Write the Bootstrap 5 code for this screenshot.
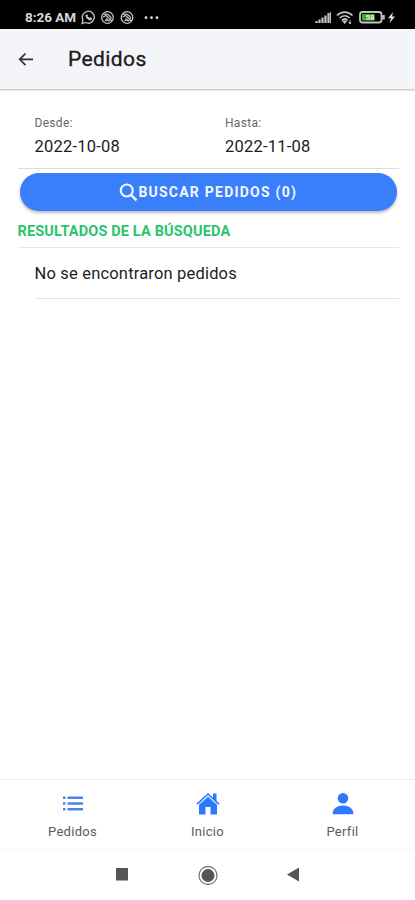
<!DOCTYPE html>
<html lang="es">
<head>
<meta charset="utf-8">
<meta name="viewport" content="width=device-width, initial-scale=1">
<title>Pedidos</title>
<link href="https://cdn.jsdelivr.net/npm/bootstrap@5.3.0/dist/css/bootstrap.min.css" rel="stylesheet">
<style>
body{font-family:Roboto,"Liberation Sans",sans-serif;color:#1c1c1e;height:900px;overflow:hidden}
svg{display:block;flex-shrink:0}
.status-bar{height:29px;background:#000;color:#d8d8d8;padding:6px 18px 0 25px}
.clock{font-size:13.5px;font-weight:700;line-height:22px;letter-spacing:-.05px;width:56px;white-space:nowrap}
.app-header{height:60px;background:#f4f5f9;padding-left:17px;box-shadow:0 1px 2px rgba(0,0,0,.3);z-index:1}
.app-title{font-size:21px;font-weight:400;-webkit-text-stroke:.35px #1c1c1e;line-height:28px;letter-spacing:.4px;margin-left:33px}
.content-area{padding:26px 16px 0 17.5px}
.dates{height:54px;border-bottom:1px solid #dcdcde}
.date-field{width:190.5px;padding-left:17px}
.field-label{font-size:12px;line-height:17px;color:#666;letter-spacing:.3px}
.field-value{font-size:16.5px;line-height:22px;margin-top:4px;letter-spacing:.22px}
.search-btn{height:38px;margin:4px 2px 0;background:#397ffc;color:#f2f6ff;font-size:14px;font-weight:700;letter-spacing:1.23px;box-shadow:0 2px 3px rgba(0,0,0,.28);border:0}
.results-title{font-size:14.5px;font-weight:700;line-height:22px;color:#2bc46d;margin-top:10px;height:27px;border-bottom:1px solid #e8e8ea;letter-spacing:.15px}
.result-item{font-size:16.5px;line-height:52px;height:51px;margin-left:17px;border-bottom:1px solid #e2e2e4;letter-spacing:.18px}
.tab-bar{height:71px;border-top:1px solid #ececec;border-bottom:1px solid #f7f7f7;padding:12px 5px 0}
.tab-label{font-size:13px;line-height:18px;color:#5b5b5b;margin-top:7px;letter-spacing:.3px}
.system-nav{height:50px;padding:0 115px}
</style>
<script src="https://cdn.jsdelivr.net/npm/bootstrap@5.3.0/dist/js/bootstrap.bundle.min.js"></script>
</head>
<body class="d-flex flex-column bg-white">
<div class="status-bar d-flex">
  <span class="clock">8:26 AM</span>
  <svg width="78" height="22" viewBox="81 6 78 22" fill="none" stroke="#c4c4c4" stroke-width="1.3">
    <path d="M82 23.5l1-3.5a6 6 0 1 1 2.5 2.5z"/><path d="M86 14.7c-1 3 3 6.500 5.500 5l.3-1.400-1.800-.9-.9.700-1.800-1.800.5-1z" fill="#c4c4c4" stroke-width=".6"/>
    <circle cx="107.500" cy="17.500" r="5.800"/><path d="M103.500 14.500c3-1 6 0 8 4M103 17l3-1.500 6 5.500M105 21c1-1 3-1 5 0M106 18.500l3 2.500"/>
    <circle cx="127" cy="17.500" r="5.800"/><path d="M123 14.500c3-1 6 0 8 4M122.500 17l3-1.500 6 5.500M124.500 21c1-1 3-1 5 0M125.500 18.500l3 2.500"/>
    <g fill="#ddd" stroke="none"><circle cx="146" cy="17.700" r="1.400"/><circle cx="151.500" cy="17.700" r="1.400"/><circle cx="157" cy="17.700" r="1.400"/></g>
  </svg>
  <svg class="ms-auto" width="82" height="22" viewBox="315 6 82 22" fill="none" stroke="#c4c4c4">
    <path d="M316.500 21v2M319.500 19.500v3.500M322.500 17.500v5.500M325.500 15.500v7.500M328.500 13v10" stroke-width="2.200"/><path d="M330.500 12v11" stroke-width="1"/>
    <path d="M337 15.500c4.500-4.500 11-4.500 15.500 0M339.700 18c3-3 7-3 10 0M342 20.300c2-1.800 3.700-1.800 5.500 0" stroke-width="1.700"/><path d="M344.700 23.500l-2-2.500h4zM350 20v4M348.500 22.500l1.500 1.500 1-1.500" fill="#c4c4c4" stroke-width=".9"/>
    <rect x="360" y="12" width="21.500" height="10.500" rx="2.500" stroke-width="1.800"/><path d="M383.500 15v4.500" stroke-width="2.500"/>
    <path d="M362 14h12.500v6.500H362z" fill="#46a82b" stroke="none"/>
    <text x="365.500" y="20.300" font-size="8" font-weight="700" fill="#e9f5e4" stroke="none">58</text>
    <path d="M393 12l-5 6.300h3l-1.500 5 5.500-6.800h-3z" fill="#ddd" stroke="none"/>
  </svg>
</div>
<header class="app-header d-flex align-items-center">
  <svg width="18" height="18" viewBox="0 0 18 18" fill="none" stroke="#303134" stroke-width="1.700"><path d="M8.500 3.500L2.700 9.300l5.800 5.800M2.900 9.300H16"/></svg>
  <h1 class="app-title mb-0">Pedidos</h1>
</header>
<main class="content-area flex-grow-1">
  <div class="dates d-flex">
    <div class="date-field"><div class="field-label">Desde:</div><div class="field-value">2022-10-08</div></div>
    <div class="date-field"><div class="field-label">Hasta:</div><div class="field-value">2022-11-08</div></div>
  </div>
  <div class="d-grid">
    <button type="button" class="btn search-btn rounded-pill d-flex align-items-center justify-content-center p-0">
      <svg width="19" height="20" viewBox="0 0 19 20" fill="none" stroke="#f2f6ff" stroke-width="2.200"><circle cx="7.800" cy="8.500" r="6"/><path d="M12 12.800l5.500 5.500" stroke-width="2.500"/></svg><span>BUSCAR PEDIDOS (0)</span>
    </button>
  </div>
  <h2 class="results-title mb-0">RESULTADOS DE LA BÚSQUEDA</h2>
  <div class="result-item">No se encontraron pedidos</div>
</main>
<nav class="tab-bar d-flex text-center">
  <div class="col d-flex flex-column align-items-center">
    <svg width="24" height="24" viewBox="0 0 24 24" fill="#4a83f0"><path d="M2 4.500h2.500V7H2zM6.500 4.500H22V7H6.500zM2 10.200h2.500v2.500H2zM6.500 10.200H22v2.500H6.500zM2 16h2.500v2.500H2zM6.500 16H22v2.500H6.500z"/></svg>
    <span class="tab-label">Pedidos</span>
  </div>
  <div class="col d-flex flex-column align-items-center">
    <svg width="26" height="24" viewBox="0 0 26 24" fill="#2f77fb"><path d="M13 4.300L4 12v10.500h6.500V15h5v7.500H22V12z"/><path d="M18 1.500h3.500v8L18 6.500z"/><path d="M3.500 13l9.500-8.500 9.500 8.500" fill="none" stroke="#fff" stroke-width=".6"/><path d="M2 12.200L13 2l11 10.200" fill="none" stroke="#2f77fb" stroke-width="1.600"/></svg>
    <span class="tab-label">Inicio</span>
  </div>
  <div class="col d-flex flex-column align-items-center">
    <svg width="24" height="24" viewBox="0 0 24 24" fill="#2f77fb"><circle cx="12" cy="6.300" r="5.300"/><path d="M1.700 22.300V21c0-4.500 4.800-7.500 10.300-7.500s10.300 3 10.300 7.500v1.300z"/></svg>
    <span class="tab-label">Perfil</span>
  </div>
</nav>
<div class="system-nav d-flex align-items-center justify-content-between">
  <svg width="14" height="22" viewBox="0 0 14 22"><path d="M1 4h12v12.500H1z" fill="#555"/></svg>
  <svg width="22" height="22" viewBox="0 0 22 22"><circle cx="11" cy="11.500" r="9" fill="none" stroke="#777" stroke-width="1.300"/><circle cx="11" cy="11.500" r="6.500" fill="#555"/></svg>
  <svg width="14" height="22" viewBox="0 0 14 22"><path d="M13 3.500v14L1 10.500z" fill="#555"/></svg>
</div>
</body>
</html>
